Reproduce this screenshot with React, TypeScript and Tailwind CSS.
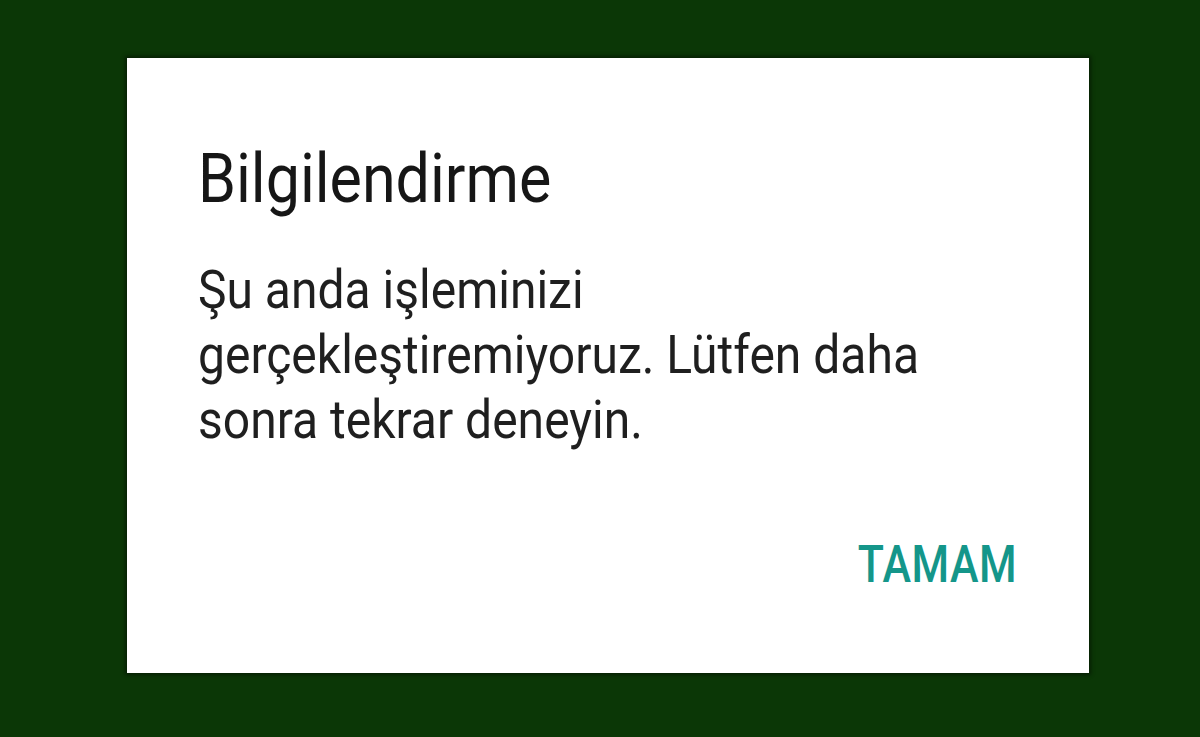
import React from "react";

export default function App() {
  return (
    <div
      className="h-[737px] w-[1200px] overflow-hidden bg-[#0b3706] pt-[58px] pl-[127px]"
      style={{ fontFamily: "Roboto, 'Noto Sans', sans-serif" }}
    >
      {/* dialog — the source image is slightly stretched vertically, hence scale-y on the text */}
      <div className="flex h-[615px] w-[962px] flex-col bg-white pl-[71px] pr-[72px] shadow-[0_0_4px_2px_rgba(0,0,0,0.45)]">
        <h1 className="mt-[80px] origin-top scale-y-[1.13] text-[61px] leading-[72px] font-normal text-[#161616]">
          Bilgilendirme
        </h1>
        <p className="mt-[47px] w-[760px] origin-top scale-y-[1.13] text-[48px] leading-[57.5px] text-[#1f1f1f]">
          Şu anda işleminizi
          <br />
          gerçekleştiremiyoruz. Lütfen daha
          <br />
          sonra tekrar deneyin.
        </p>
        <div className="mt-auto mb-[89px] flex justify-end">
          <button className="origin-top scale-y-[1.2] text-[43px] leading-[50px] font-medium tracking-[0.5px] text-[#14968a]">
            TAMAM
          </button>
        </div>
      </div>
    </div>
  );
}
